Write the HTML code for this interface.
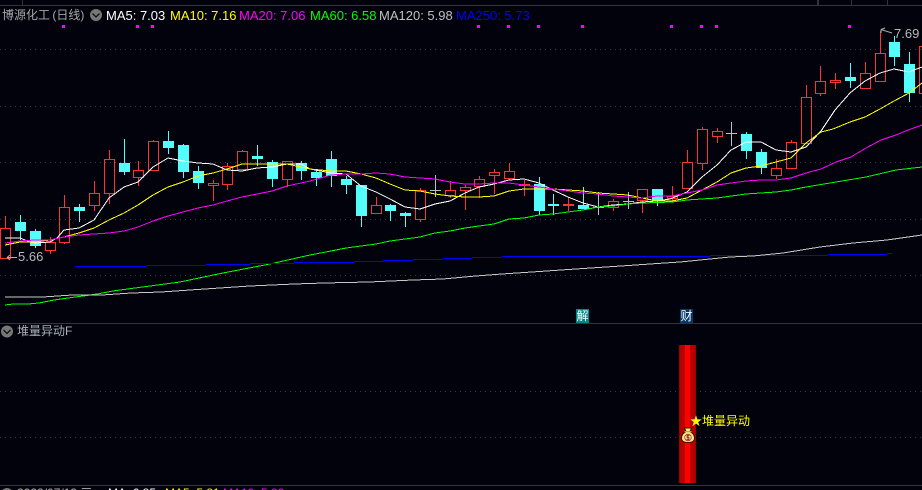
<!DOCTYPE html>
<html><head><meta charset="utf-8"><style>
html,body{margin:0;padding:0;background:#02020c}
#p{position:relative;width:922px;height:490px;overflow:hidden;background:#02020c;font-family:"Liberation Sans","Noto Sans CJK SC",sans-serif}
#p svg{position:absolute;left:0;top:0}
.t{position:absolute;white-space:nowrap;font-size:13px;line-height:15px}
polyline{stroke-width:1}
</style></head><body><div id="p">
<svg width="922" height="490" viewBox="0 0 922 490" fill="none" shape-rendering="crispEdges">
<path d="M0 5.5H922M22.5 0V5M817.5 0V5M818.5 0V5M851.5 0V5M887.5 0V5M0 323.5H922M0 485.5H922" stroke="#33333b"/>
<path d="M0 49.5H922M0 106.5H922M0 162.5H922M0 219.5H922M0 275.5H922M0 391.5H922M0 437.5H922" stroke="#3a3a3a" stroke-dasharray="1 4"/>
<path fill="#ff00ff" d="M62 25h3v3h-3zM136 25h3v3h-3zM151 25h3v3h-3zM477 25h3v3h-3zM507 25h3v3h-3zM537 25h3v3h-3zM581 25h3v3h-3zM670 25h3v3h-3zM700 25h3v3h-3zM715 25h3v3h-3zM848 25h3v3h-3z"/>
<path stroke="#54fcfc" d="M20.5 215V240M35.5 229V248M79.5 204V222M124.5 139V175M168.5 131V154M183.5 144V178M198.5 166V189M257.5 145V166M272.5 160V187M301.5 161V180M316.5 170V186M331.5 151V187M346.5 176V194M361.5 185V227M390.5 204V221M405.5 212V227M539.5 177V215M553.5 194V215M583.5 187V209M657.5 189V206M746.5 132V159M761.5 149V174M850.5 63V88M894.5 36V66M909.5 52V102"/>
<path fill="#54fcfc" d="M15 222h11v9h-11zM30 231h11v15h-11zM74 207h11v4h-11zM119 163h11v9h-11zM163 141h11v7h-11zM178 145h11v27h-11zM193 171h11v12h-11zM252 156h11v3h-11zM267 162h11v17h-11zM296 163h11v8h-11zM311 172h11v6h-11zM326 159h11v17h-11zM341 179h11v6h-11zM356 185h11v31h-11zM385 205h11v6h-11zM400 213h11v3h-11zM534 184h11v27h-11zM548 204h11v2h-11zM578 205h11v4h-11zM652 189h11v12h-11zM741 134h11v17h-11zM756 152h11v16h-11zM845 77h11v4h-11zM889 42h11v15h-11zM904 64h11v29h-11z"/>
<path stroke="#c0c0c0" d="M435.5 175V197M430 190.5H441M598.5 192V215M593 207.5H604M628.5 192V209M623 201.5H634M731.5 122V146M726 133.5H737"/>
<path stroke="#ff3232" d="M5.5 216V228M.5 228.5h10v30h-10z
M50.5 237V242M45.5 242.5h10v8h-10zM50.5 251V254
M64.5 195V207M59.5 207.5h10v35h-10zM64.5 243V244
M94.5 181V193M89.5 193.5h10v12h-10zM94.5 206V211
M109.5 150V159M104.5 159.5h10v34h-10zM109.5 194V204
M138.5 161V170M133.5 170.5h10v7h-10zM138.5 178V186
M153.5 140V141M148.5 141.5h10v29h-10z
M213.5 180V183M208.5 183.5h10v2h-10zM213.5 186V201
M227.5 163V166M222.5 166.5h10v18h-10zM227.5 185V190
M242.5 150V151M237.5 151.5h10v18h-10z
M282.5 161.5h10v18h-10zM287.5 180V187
M371.5 205.5h10v8h-10zM376.5 197V205
M415.5 190.5h10v29h-10zM420.5 188V190M420.5 220V222
M450.5 181V190M445.5 190.5h10v5h-10zM450.5 196V198
M460.5 187.5h10v3h-10zM465.5 185V187M465.5 191V210
M474.5 179.5h10v7h-10zM479.5 176V179M479.5 187V198
M489.5 172.5h10v3h-10zM494.5 169V172M494.5 176V194
M504.5 171.5h10v7h-10zM509.5 163V171M509.5 179V180
M519.5 184.5h10v1h-10zM524.5 180V184M524.5 186V196
M563 204.5h11M563 205.5h11M568.5 197V211
M608.5 201.5h10v6h-10zM613.5 199V201M613.5 208V211
M637.5 189.5h10v11h-10zM642.5 201V213
M667.5 196.5h10v2h-10zM672.5 186V196M672.5 199V202
M682.5 162.5h10v26h-10zM687.5 150V162
M697.5 129.5h10v34h-10zM702.5 127V129M702.5 164V170
M712.5 131.5h10v5h-10zM717.5 128V131M717.5 137V143
M771.5 168.5h10v7h-10zM776.5 159V168M776.5 176V179
M786.5 142.5h10v26h-10zM791.5 140V142
M801.5 97.5h10v46h-10zM806.5 85V97
M815.5 81.5h10v12h-10zM820.5 66V81M820.5 94V96
M830.5 80.5h10v2h-10zM835.5 73V80M835.5 83V89
M860.5 73.5h10v15h-10zM865.5 62V73
M875.5 53.5h10v28h-10zM880.5 31V53
M919.5 46.5h10v47h-10z"/>
<polyline stroke="#ffffff" points="5,238 20,238 30,242 35,243 50,242 57,238 64,230 79,228 94,220 109,198 124,187 138,182 153,167 168,158 183,161 198,163 213,164 227,170 242,171 257,168 272,167 287,164 301,164 310,169 331,173 346,174 361,186 376,192 390,199 405,207 420,209 435,204 450,201 465,193 479,187 494,184 509,180 524,179 539,183 553,190 568,197 583,203 598,207 613,205 628,204 642,202 657,201 670,199 687,192 702,177 717,165 731,150 746,142 761,142 776,150 791,152 806,147 821,131 835,110 850,93 865,81 880,73 894,69 909,72 922,67"/>
<polyline stroke="#ffff00" points="5,245 20,242 35,242 50,240 64,237 79,233 94,228 109,220 124,213 138,205 153,195 168,187 183,182 198,176 213,173 227,169 242,164 257,164 272,164 287,164 301,167 310,169 331,171 346,171 361,174 376,178 390,184 405,190 420,191 435,194 450,196 465,197 479,197 494,196 509,191 524,189 539,189 553,189 568,190 583,191 598,193 613,194 628,195 642,198 657,201 672,201 687,198 702,190 717,182 731,173 746,168 761,166 776,162 791,158 806,143 821,132 833,129 850,122 865,117 880,109 894,101 909,93 922,83"/>
<polyline stroke="#ff00ff" points="5,243 20,241 35,240 50,240 64,237 79,235 94,234 109,233 124,231 138,227 153,221 168,216 183,212 198,208 213,205 227,201 242,197 257,194 272,191 287,186 301,183 310,181 331,175 346,174 361,174 376,173 390,174 405,177 420,178 435,179 450,182 465,184 479,184 494,183 509,183 524,185 539,187 553,189 568,191 583,193 598,194 613,196 628,197 642,198 657,196 672,196 687,193 702,190 717,185 731,183 746,181 761,180 776,180 791,178 806,173 821,169 836,162 851,157 866,148 881,140 896,135 908,130 922,125"/>
<polyline stroke="#00ff00" points="5,305 13,304 28,304 39,303 54,300 68,298 83,296 97,294 113,291 135,288 180,282 223,273 270,264 310,255 331,251 346,248 361,246 376,244 390,241 405,239 420,237 435,233 450,231 465,228 479,226 494,224 509,219 524,218 539,215 553,214 568,212 583,210 598,207 613,206 628,204 642,203 672,202 687,200 717,198 746,194 776,192 791,190 806,187 836,182 866,177 896,170 922,167"/>
<path stroke="#0000ff" d="M75 266.5H146M146 265.5H206M206 264.5H250M250 263.5H294M294 262.5H354M354 261.5H383M383 260.5H413M413 259.5H443M443 258.5H472M472 257.5H502M502 256.5H710M710 255.5H828M828 254.5H887M887 253.5H892"/>
<polyline stroke="#c8c8c8" points="5,297 43,297 72,295 102,295 131,293 161,292 190,290 220,288 250,286 294,284 324,283 369,282 413,280 443,279 476,276 502,274 532,272 561,270 591,268 621,266 650,264 680,262 710,259 730,257 753,256 783,253 820,247 853,243 887,240 922,235"/>
<rect x="679" y="345" width="17" height="138" fill="#b80000"/>
<rect x="685" y="345" width="5" height="138" fill="#ff0000"/>
<rect x="679" y="345" width="1" height="138" fill="#a00000"/>
<rect x="695" y="345" width="1" height="138" fill="#a00000"/>
</svg>
<svg width="922" height="490" viewBox="0 0 922 490" fill="none">
<path d="M892 33L881 29.500M881 29.500L885 28M881 29.500V33" stroke="#b0b0b0"/>
<path d="M17 257.500H7M7 257.500L10 255M7 257.500L10 260" stroke="#b0b0b0"/>
<circle cx="96" cy="15" r="6" fill="#777"/><path d="M92.500 13.500L96 17L99.500 13.500" stroke="#111" stroke-width="1.300"/>
<circle cx="7" cy="331.500" r="6" fill="#777"/><path d="M3.500 330L7 333.500L10.500 330" stroke="#111" stroke-width="1.300"/>
<circle cx="7" cy="494" r="6" fill="#777"/>
<path d="M684.500 428h7l-1.500 3.500c3 1.500 4.500 4 4.500 6.500 0 3-2.500 4.500-6.500 4.500s-6.500-1.500-6.500-4.500c0-2.500 1.500-5 4.500-6.500z" fill="#ffe97a" stroke="#2a1a00"/>
<rect x="684.500" y="431" width="7" height="1.200" fill="#d8a000"/>
<circle cx="688" cy="437.500" r="3.300" fill="#f0e0b0" stroke="#a04030" stroke-width=".8"/>
<path d="M689.500 435.500h-2.500v2h2v2h-2.500M688 434.500v6" stroke="#902020" stroke-width=".7"/>
</svg>
<div class="t" style="left:2px;top:8px;color:#a8a8a8;font-size:12px;word-spacing:-1px">博源化工 (日线)</div>
<div class="t" style="left:106px;top:8px;color:#ffffff">MA5: 7.03</div>
<div class="t" style="left:170px;top:8px;color:#ffff00">MA10: 7.16</div>
<div class="t" style="left:239px;top:8px;color:#ff00ff">MA20: 7.06</div>
<div class="t" style="left:310px;top:8px;color:#00ff00">MA60: 6.58</div>
<div class="t" style="left:379px;top:8px;color:#c0c0c0">MA120: 5.98</div>
<div class="t" style="left:456px;top:8px;color:#0000ff">MA250: 5.73</div>
<div class="t" style="left:894px;top:26px;color:#b8b8b8">7.69</div>
<div class="t" style="left:18px;top:249px;color:#b8b8b8">5.66</div>
<div class="t" style="left:576px;top:309px;width:13px;height:14px;background:#058686;color:#fff;font-size:12px;line-height:14px;text-align:center;overflow:hidden">解</div>
<div class="t" style="left:680px;top:309px;width:13px;height:14px;background:#03376b;color:#fff;font-size:12px;line-height:14px;text-align:center;overflow:hidden">财</div>
<div class="t" style="left:17px;top:324px;color:#a8b0b8;font-size:12px">堆量异动F</div>
<div class="t" style="left:690px;top:414px;color:#ffff00;font-size:12px">★堆量异动</div>
<div class="t" style="left:17px;top:486px;color:#b0b0b0;font-size:12px">2022/07/13 三</div>
<div class="t" style="left:108px;top:486px;color:#fff;font-size:12px">MA: 6.85</div>
<div class="t" style="left:165px;top:486px;color:#ffff00;font-size:12px">MA5: 5.81</div>
<div class="t" style="left:223px;top:486px;color:#ff00ff;font-size:12px">MA10: 5.89</div>
</div></body></html>
